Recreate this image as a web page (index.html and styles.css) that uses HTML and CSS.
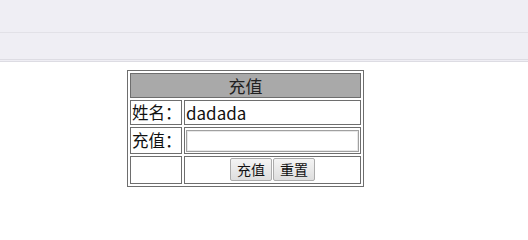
FILE: index.html
```html
<!DOCTYPE html>
<html>
<head>
<meta charset="utf-8">
<link rel="stylesheet" href="styles.css">
</head>
<body>
<div class="bar bar-top"></div>
<div class="bar bar-sub"></div>
<div class="content">
<table class="form">
  <colgroup><col class="c1"><col class="c2"></colgroup>
  <tr><td colspan="2" class="head">充值</td></tr>
  <tr class="r2"><td class="lbl">姓名：</td><td class="val">dadada</td></tr>
  <tr class="r3"><td class="lbl">充值：</td><td class="val"><input type="text" class="inp"></td></tr>
  <tr class="r4"><td class="lbl"></td><td class="btns"><button class="btn">充值</button><button class="btn">重置</button></td></tr>
</table>
</div>
</body>
</html>
```
FILE: styles.css
```css
html, body { margin: 0; padding: 0; background: #fff; }
body { font-family: "Noto Sans CJK SC", "Noto Sans", sans-serif; color: #111; }
.bar { background: #efeef4; }
.bar-top { height: 32px; border-bottom: 1px solid #e2e1e7; }
.bar-sub { height: 26px; border-bottom: 3px double #dddce3; }
.content { padding: 8px 0 0 127px; }
.form {
  border: 1px solid #6e6e6e;
  border-spacing: 2px;
  width: 237px;
  table-layout: fixed;
  font-size: 16px;
}
.c1 { width: 52px; }
.c2 { width: 177px; }
.form td { border: 1px solid #6e6e6e; padding: 0 1px; line-height: 23px; box-sizing: border-box; }
.head { height: 25px; background: #a9a9a9; text-align: center; color: #222; font-size: 17px; }
.r2 td { height: 25px; }
.r3 td { height: 27px; }
.r4 td { height: 28px; }
.lbl { white-space: nowrap; overflow: visible; font-size: 16.5px; }
.val { font-size: 17px; }
.inp {
  display: block;
  box-sizing: border-box;
  width: 173px;
  height: 22px;
  margin: 0;
  border: 1px solid #a0a0a0;
  box-shadow: inset 0 0 0 1px #e8e8e8;
  padding: 0 2px;
}
.btns { text-align: center; font-size: 0; }
.btn {
  font-family: "Noto Sans CJK SC", sans-serif;
  font-size: 14px;
  color: #111;
  height: 23px;
  line-height: 19px;
  padding: 0 6px;
  margin: 0;
  border: 1px solid #acacac;
  border-radius: 2px;
  background: linear-gradient(#f4f4f4, #dedede);
  vertical-align: middle;
}
.btn + .btn { margin-left: 1px; }
```
